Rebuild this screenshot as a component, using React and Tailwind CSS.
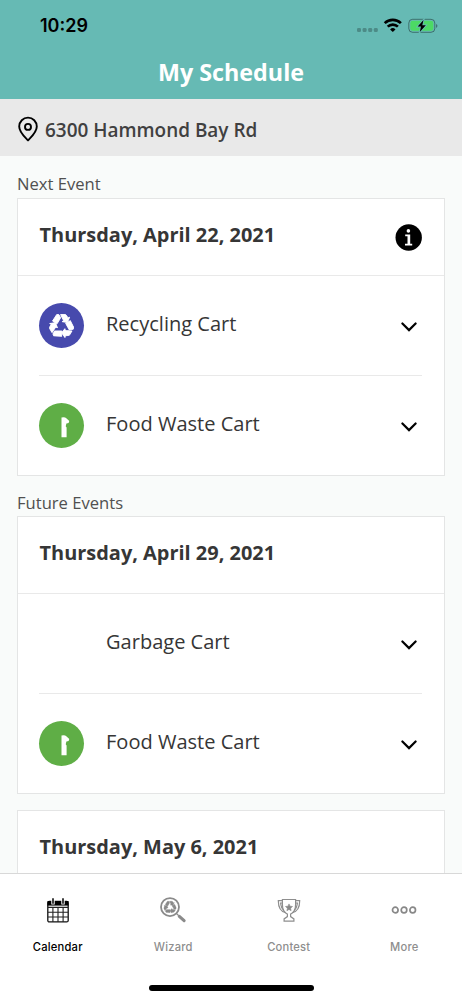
const nextEvent = {
  date: "Thursday, April 22, 2021",
  info: true,
  items: [
    { name: "Recycling Cart", type: "recycling" },
    { name: "Food Waste Cart", type: "food" },
  ],
};

const futureEvents = [
  {
    date: "Thursday, April 29, 2021",
    items: [
      { name: "Garbage Cart", type: "garbage" },
      { name: "Food Waste Cart", type: "food" },
    ],
  },
  { date: "Thursday, May 6, 2021", items: [] },
];

function StatusIcons() {
  return (
    <svg width="82" height="18" viewBox="0 0 82 18" fill="none">
      <g fill="#000" fillOpacity="0.25">
        <rect x="1" y="11" width="4" height="4" rx="1.3" />
        <rect x="6.6" y="11" width="4" height="4" rx="1.3" />
        <rect x="12.2" y="11" width="4" height="4" rx="1.3" />
        <rect x="17.8" y="11" width="4" height="4" rx="1.3" />
      </g>
      <g stroke="#000" strokeWidth="2.6">
        <path d="M28.7 6.2a11.5 11.5 0 0 1 16.2 0" />
        <path d="M31.7 9.7a7.2 7.2 0 0 1 10.2 0" />
      </g>
      <path d="M36.8 15l-2.7-2.6a3.8 3.8 0 0 1 5.4 0z" fill="#000" />
      <rect x="52.8" y="2.3" width="26" height="13" rx="3.8" stroke="#000" strokeOpacity="0.4" />
      <rect x="54.3" y="3.8" width="23" height="10" rx="2.4" fill="#4cd964" />
      <path d="M80.2 7c1.6.7 1.6 3.2 0 3.9z" fill="#000" fillOpacity="0.45" />
      <path
        d="M67.5 3.1l-5.8 6.4h3.3l-1.2 5.4 6-6.6h-3.5z"
        fill="#000"
        stroke="#66bab4"
        strokeWidth="1.8"
        paintOrder="stroke"
      />
    </svg>
  );
}

function PinIcon() {
  return (
    <svg width="20" height="26" viewBox="0 0 20 26" fill="none" stroke="#000" strokeWidth="1.9" className="mt-[3px]">
      <path d="M10 24.4C7.5 21.7 1.2 16.6 1.2 10.6a8.8 9 0 0 1 17.6 0C18.8 16.6 12.5 21.7 10 24.4z" strokeLinejoin="round" />
      <circle cx="10" cy="10.9" r="3" />
    </svg>
  );
}

function InfoIcon() {
  return (
    <svg width="27" height="27" viewBox="0 0 27 27">
      <circle cx="13.7" cy="13.5" r="13.2" fill="#000" />
      <circle cx="13.4" cy="6.9" r="1.8" fill="#fff" />
      <path d="M10.2 10.4h5v9.3h2v1.9H10v-1.9h2.5v-7.4h-2.3z" fill="#fff" />
    </svg>
  );
}

function Chevron() {
  return (
    <svg width="16" height="10" viewBox="0 0 16 10" fill="none" stroke="#000" strokeWidth="2.2" className="translate-y-px">
      <path d="M1.4 1.5L8 8.1l6.6-6.6" strokeLinecap="round" />
    </svg>
  );
}

// one folded arrow, repeated every 120 degrees
const arrow = "M-4.6 -11L-8.6 -4.8L-4.2 -2.2L-0.8 -8L-2.6 -11ZM-0.9 -11H3.4Q4.4 -10.9 5 -9.8L6.2 -7.8L7.8 -8.4L5.6 -3.4L0.6 -4.2L2 -5.3Z";

function RecycleIcon({ color, ...rest }) {
  return (
    <svg viewBox="-12 -12.5 24 24" fill={color} stroke={color} strokeWidth="0.9" strokeLinejoin="round" {...rest}>
      <path d={arrow} />
      <path d={arrow} transform="rotate(120)" />
      <path d={arrow} transform="rotate(240)" />
    </svg>
  );
}

function CartIcon({ type }) {
  if (type === "recycling") {
    return (
      <div className="flex size-[45px] items-center justify-center rounded-full bg-[#474aad]">
        <RecycleIcon color="#fff" width={25} height={25} />
      </div>
    );
  }
  if (type === "food") {
    return (
      <div className="flex size-[45px] items-center justify-center rounded-full bg-[#5fae46]">
        <svg width="45" height="45" viewBox="0 0 45 45">
          <path d="M22.5 14.6q3.4-.7 4.8.6l3 2.7-.7 2-2.2.5-.7 2.8.9 1.4v9.6h-5.1z" fill="#fff" />
        </svg>
      </div>
    );
  }
  // garbage has no icon
  return <div className="size-[45px]" />;
}

function EventCard({ event }) {
  return (
    <div className="border border-[#e4e5e5] bg-white">
      <div className="flex h-[77px] items-center justify-between border-b border-[#e9e9e9] pr-[22px] pl-[21.5px]">
        <h2 className="pb-[5px] text-[19.95px] leading-7 font-bold text-[#363636]">{event.date}</h2>
        {event.info && <InfoIcon />}
      </div>
      <div className="pr-[22px] pl-[21px]">
        {event.items.map((item) => (
          <div
            key={item.name}
            className="flex h-[100px] items-center border-b border-[#e9e9e9] pr-[5.5px] last:h-[99px] last:border-b-0"
          >
            <CartIcon type={item.type} />
            <span className="ml-[22px] flex-1 pb-[3px] text-[20.05px] leading-7 text-[#363636]">{item.name}</span>
            <Chevron />
          </div>
        ))}
      </div>
    </div>
  );
}

function CalendarIcon() {
  return (
    <svg width="24" height="26" viewBox="0 0 24 26" fill="none">
      <rect x="1.8" y="4.4" width="20.4" height="20.5" rx="1.5" stroke="#111" strokeWidth="1.3" />
      <path d="M1.5 4h21v4.6h-21z" fill="#000" />
      <path d="M6.9 10v15M12 10v15M17.1 10v15M2 10.4h20M2 15.2h20M2 20h20" stroke="#222" strokeWidth="1.1" />
      <path d="M7 1.5v6M17 1.5v6" stroke="#fff" strokeWidth="3.4" />
      <path d="M7 1.2v5.5M17 1.2v5.5" stroke="#111" strokeWidth="1.6" />
    </svg>
  );
}

function WizardIcon() {
  return (
    <svg width="28" height="28" viewBox="0 0 28 28" fill="none" stroke="#8a8a8a">
      <circle cx="11" cy="11.1" r="9" strokeWidth="1.8" />
      <path d="M20.3 20.3l4.8 4.4" strokeWidth="3.1" strokeLinecap="round" />
      <path d="M17.3 17.4l2.2 2.1" strokeWidth="1.2" />
      <RecycleIcon x={4.5} y={4.4} width={13} height={13} color="#8a8a8a" />
    </svg>
  );
}

function ContestIcon() {
  return (
    <svg width="24" height="24" viewBox="0 0 24 24" fill="none" stroke="#8e8e8e" strokeWidth="1.2">
      <path d="M5.4 1.5h13.2v5c0 5-2 8.2-5 9.6v2.5l3.3 2.3v2.2H7.1v-2.2l3.3-2.3v-2.5c-3-1.4-5-4.6-5-9.6z" />
      <path d="M5.4 2.7H1.3c0 6.2 2 10.8 7.5 12M18.6 2.7h4.1c0 6.2-2 10.8-7.5 12" />
      <path d="M5.4 5H3.6c.3 3.2 1.2 5.6 3.2 7.2M18.6 5h1.8c-.3 3.2-1.2 5.6-3.2 7.2" />
      <path
        d="M12 5.9l1 2.3 2.5.3-1.9 1.7.5 2.5-2.1-1.3-2.1 1.3.5-2.5-1.9-1.7 2.5-.3z"
        fill="#888"
        stroke="#888"
        strokeWidth="0.6"
      />
    </svg>
  );
}

function MoreIcon() {
  return (
    <svg width="26" height="10" viewBox="0 0 26 10" fill="none" stroke="#888" strokeWidth="1.7">
      <circle cx="4.3" cy="5" r="2.8" />
      <circle cx="13" cy="5" r="2.8" />
      <circle cx="21.7" cy="5" r="2.8" />
    </svg>
  );
}

const tabs = [
  { label: "Calendar", Icon: CalendarIcon, active: true },
  { label: "Wizard", Icon: WizardIcon },
  { label: "Contest", Icon: ContestIcon },
  { label: "More", Icon: MoreIcon },
];

export default function App() {
  return (
    <div className="flex h-[1000px] w-[462px] flex-col overflow-hidden bg-[#f9fbfa] font-['Open_Sans',sans-serif]">
      <header className="h-[98.5px] shrink-0 bg-[#66bab4]">
        <div className="flex h-[52px] items-center justify-between pr-[24px] pl-[40px]">
          <span className="pb-px font-['Inter',sans-serif] text-[18px] font-semibold text-black">10:29</span>
          <StatusIcons />
        </div>
        <h1 className="text-center text-[23.3px] leading-[40px] font-bold text-white">My Schedule</h1>
      </header>

      <div className="flex h-[57.5px] shrink-0 items-center gap-[7px] bg-[#e9e9e9] pl-[18px]">
        <PinIcon />
        <span className="pt-[6px] text-[18.95px] font-semibold text-[#404040]">6300 Hammond Bay Rd</span>
      </div>

      <main className="min-h-0 flex-1 overflow-hidden px-[17px]">
        <h3 className="h-[42px] pt-[16px] text-[16.6px] leading-6 text-[#505050]">Next Event</h3>
        <EventCard event={nextEvent} />
        <h3 className="h-[40px] pt-[15px] text-[16.6px] leading-6 text-[#505050]">Future Events</h3>
        <div className="flex flex-col gap-4">
          {futureEvents.map((event) => (
            <EventCard key={event.date} event={event} />
          ))}
        </div>
      </main>

      <nav className="flex h-[127px] shrink-0 flex-col items-center border-t border-[#d8d8d8] bg-white">
        <div className="grid h-[111px] w-full grid-cols-4">
          {tabs.map(({ label, Icon, active }) => (
            <div key={label} className="flex flex-col items-center pt-[22px]">
              <div className="flex h-7 items-center">
                <Icon />
              </div>
              <span
                className={`mt-[15px] font-['Inter',sans-serif] text-[11.2px] leading-4 font-medium tracking-[0.2px] ${
                  active ? "text-black" : "text-[#8e8e8e]"
                }`}
              >
                {label}
              </span>
            </div>
          ))}
        </div>
        <div className="h-[6px] w-[165px] rounded-full bg-black" />
      </nav>
    </div>
  );
}
